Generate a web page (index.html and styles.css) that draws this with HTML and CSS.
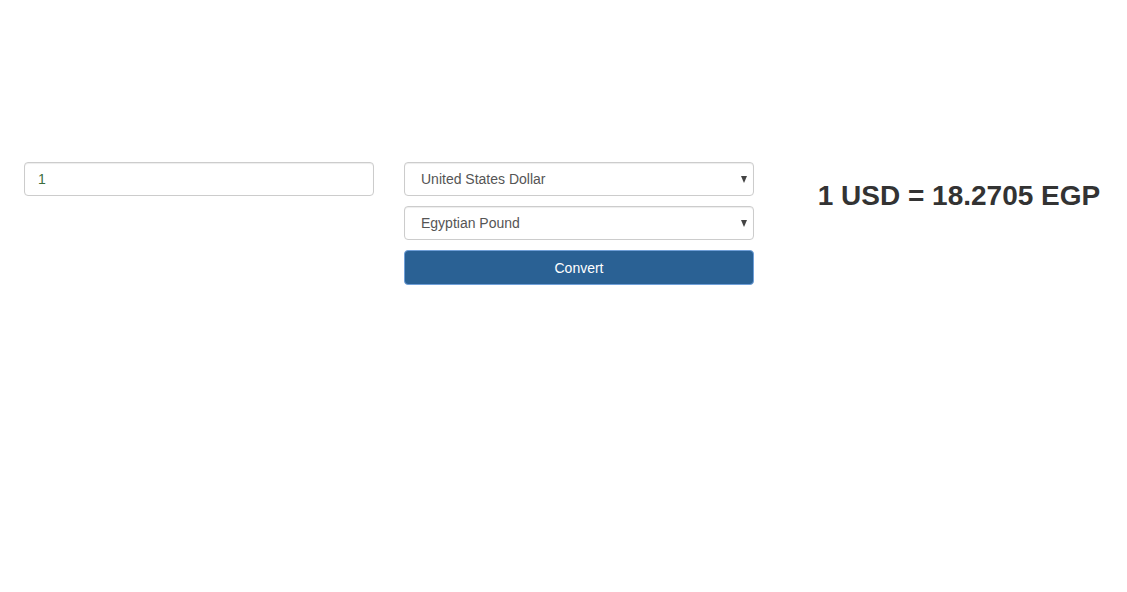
FILE: index.html
```html
<!DOCTYPE html>
<html>
<head>
<meta charset="utf-8">
<title>Currency Converter</title>
<link rel="stylesheet" href="styles.css">
</head>
<body>
<div class="row">
  <div class="col">
    <input class="field amount" type="text" value="1">
  </div>
  <div class="col stack">
    <div class="select-wrap">
      <select class="field select">
        <option>United States Dollar</option>
      </select>
    </div>
    <div class="select-wrap">
      <select class="field select">
        <option>Egyptian Pound</option>
      </select>
    </div>
    <button class="btn" type="button">Convert</button>
  </div>
  <div class="col result">
    <h2 class="rate">1 USD = 18.2705 EGP</h2>
  </div>
</div>
</body>
</html>
```
FILE: styles.css
```css
html, body {
  margin: 0;
  padding: 0;
  background: #fff;
  font-family: "Liberation Sans", Arial, sans-serif;
  font-size: 14px;
  color: #333;
}
.row {
  display: flex;
  gap: 30px;
  padding: 162px 0 0 24px;
}
.col {
  width: 350px;
  flex: 0 0 350px;
}
.stack {
  display: flex;
  flex-direction: column;
  gap: 10px;
}
.field {
  box-sizing: border-box;
  display: block;
  width: 100%;
  height: 34px;
  margin: 0;
  padding: 6px 12px;
  font-family: "Liberation Sans", Arial, sans-serif;
  font-size: 14px;
  line-height: 20px;
  color: #555;
  background: #fff;
  border: 1px solid #ccc;
  border-radius: 4px;
  box-shadow: inset 0 1px 1px rgba(0,0,0,.075);
  outline: none;
}
.amount {
  color: #3c6e3c;
  padding-left: 13px;
}
.select-wrap {
  position: relative;
}
.select {
  -webkit-appearance: none;
  appearance: none;
  padding-left: 16px;
}
.select-wrap::after {
  content: "";
  position: absolute;
  right: 7px;
  top: 14px;
  border-left: 3.5px solid transparent;
  border-right: 3.5px solid transparent;
  border-top: 7px solid #444;
  pointer-events: none;
}
.btn {
  box-sizing: border-box;
  display: block;
  width: 100%;
  height: 35px;
  margin: 0;
  padding: 6px 12px;
  font-family: "Liberation Sans", Arial, sans-serif;
  font-size: 14px;
  line-height: 20px;
  color: #fff;
  background: #2a6194;
  border: 1px solid #6f9fd8;
  border-radius: 4px;
  cursor: pointer;
}
.result {
  text-align: center;
}
.rate {
  margin: 18px 0 0;
  font-size: 28px;
  line-height: 32px;
  font-weight: bold;
  color: #333;
  white-space: nowrap;
}
```
